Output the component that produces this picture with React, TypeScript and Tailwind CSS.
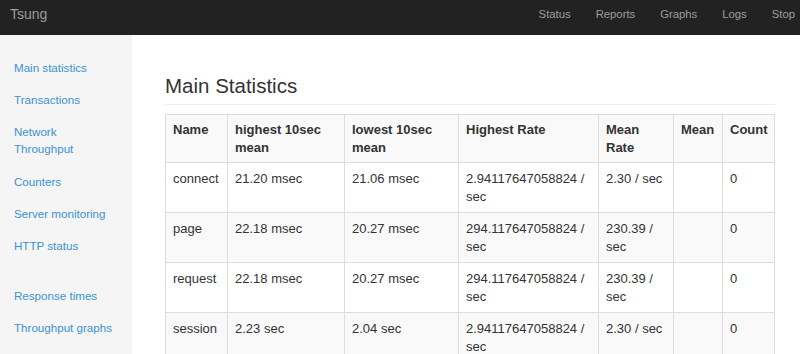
const navLinks = ["Status", "Reports", "Graphs", "Logs", "Stop"];

const sideGroups = [
  ["Main statistics", "Transactions", "Network Throughput", "Counters", "Server monitoring", "HTTP status"],
  ["Response times", "Throughput graphs"],
];

const columns = [
  { label: "Name", width: "w-[62px]" },
  { label: "highest 10sec mean", width: "w-[117px]" },
  { label: "lowest 10sec mean", width: "w-[114px]" },
  { label: "Highest Rate", width: "w-[140px]" },
  { label: "Mean Rate", width: "w-[75px]" },
  { label: "Mean", width: "w-[49px]" },
  { label: "Count", width: "w-[52px]" },
];

const rows = [
  ["connect", "21.20 msec", "21.06 msec", "2.94117647058824 / sec", "2.30 / sec", "", "0"],
  ["page", "22.18 msec", "20.27 msec", "294.117647058824 / sec", "230.39 / sec", "", "0"],
  ["request", "22.18 msec", "20.27 msec", "294.117647058824 / sec", "230.39 / sec", "", "0"],
  ["session", "2.23 sec", "2.04 sec", "2.94117647058824 / sec", "2.30 / sec", "", "0"],
];

function Navbar() {
  return (
    <header className="flex h-[35px] shrink-0 items-start justify-between bg-[#222222] pl-[10px] pr-[5px]">
      <span className="pt-[6px] text-[14px] leading-[16px] text-[#9d9d9d]">Tsung</span>
      <nav className="flex gap-[25px] pt-[6px]">
        {navLinks.map((l) => (
          <a key={l} className="text-[11.3px] leading-[16px] text-[#9d9d9d]">
            {l}
          </a>
        ))}
      </nav>
    </header>
  );
}

function Sidebar() {
  return (
    <aside className="w-[132px] shrink-0 bg-[#f5f5f5] pt-[17px]">
      {sideGroups.map((group, i) => (
        <ul key={i} className="mb-[18px]">
          {group.map((item) => (
            <li
              key={item}
              className={
                item === "Network Throughput"
                  ? "px-[14px] pt-[8px] pb-[9px] text-[11.6px] leading-[16.5px] text-[#3a93d3]"
                  : "px-[14px] py-[8px] text-[11.6px] leading-[16px] text-[#3a93d3]"
              }
            >
              {item}
            </li>
          ))}
        </ul>
      ))}
    </aside>
  );
}

function StatsTable() {
  return (
    <table className="w-[609px] table-fixed border-collapse border border-[#dddddd] text-[13px] leading-[18px] text-[#333333]">
      <colgroup>
        {columns.map((c) => (
          <col key={c.label} className={c.width} />
        ))}
      </colgroup>
      <thead>
        <tr className="bg-[#f9f9f9]">
          {columns.map((c) => (
            <th key={c.label} className="border border-[#dddddd] pt-[6px] pb-[5px] pl-[7px] pr-[4px] text-left align-top font-bold">
              {c.label}
            </th>
          ))}
        </tr>
      </thead>
      <tbody>
        {rows.map((r, i) => (
          <tr key={r[0]} className={i % 2 === 1 ? "bg-[#f9f9f9]" : "bg-white"}>
            {r.map((cell, j) => (
              <td key={j} className="h-[50px] border border-[#dddddd] pt-[7.5px] pb-[5.5px] pl-[7px] pr-[4px] align-top">
                {cell}
              </td>
            ))}
          </tr>
        ))}
      </tbody>
    </table>
  );
}

export default function App() {
  return (
    <div className="flex h-[354px] w-[800px] flex-col overflow-hidden bg-white font-['Liberation_Sans',Arial,sans-serif]">
      <Navbar />
      <div className="flex min-h-0 flex-1">
        <Sidebar />
        <main className="flex-1 pl-[33px] pr-[25px] pt-[40px]">
          <h3 className="mb-[9px] border-b border-[#eeeeee] pb-[6px] text-[20.5px] font-normal leading-[22.5px] text-[#333333]">
            Main Statistics
          </h3>
          <StatsTable />
        </main>
      </div>
    </div>
  );
}
